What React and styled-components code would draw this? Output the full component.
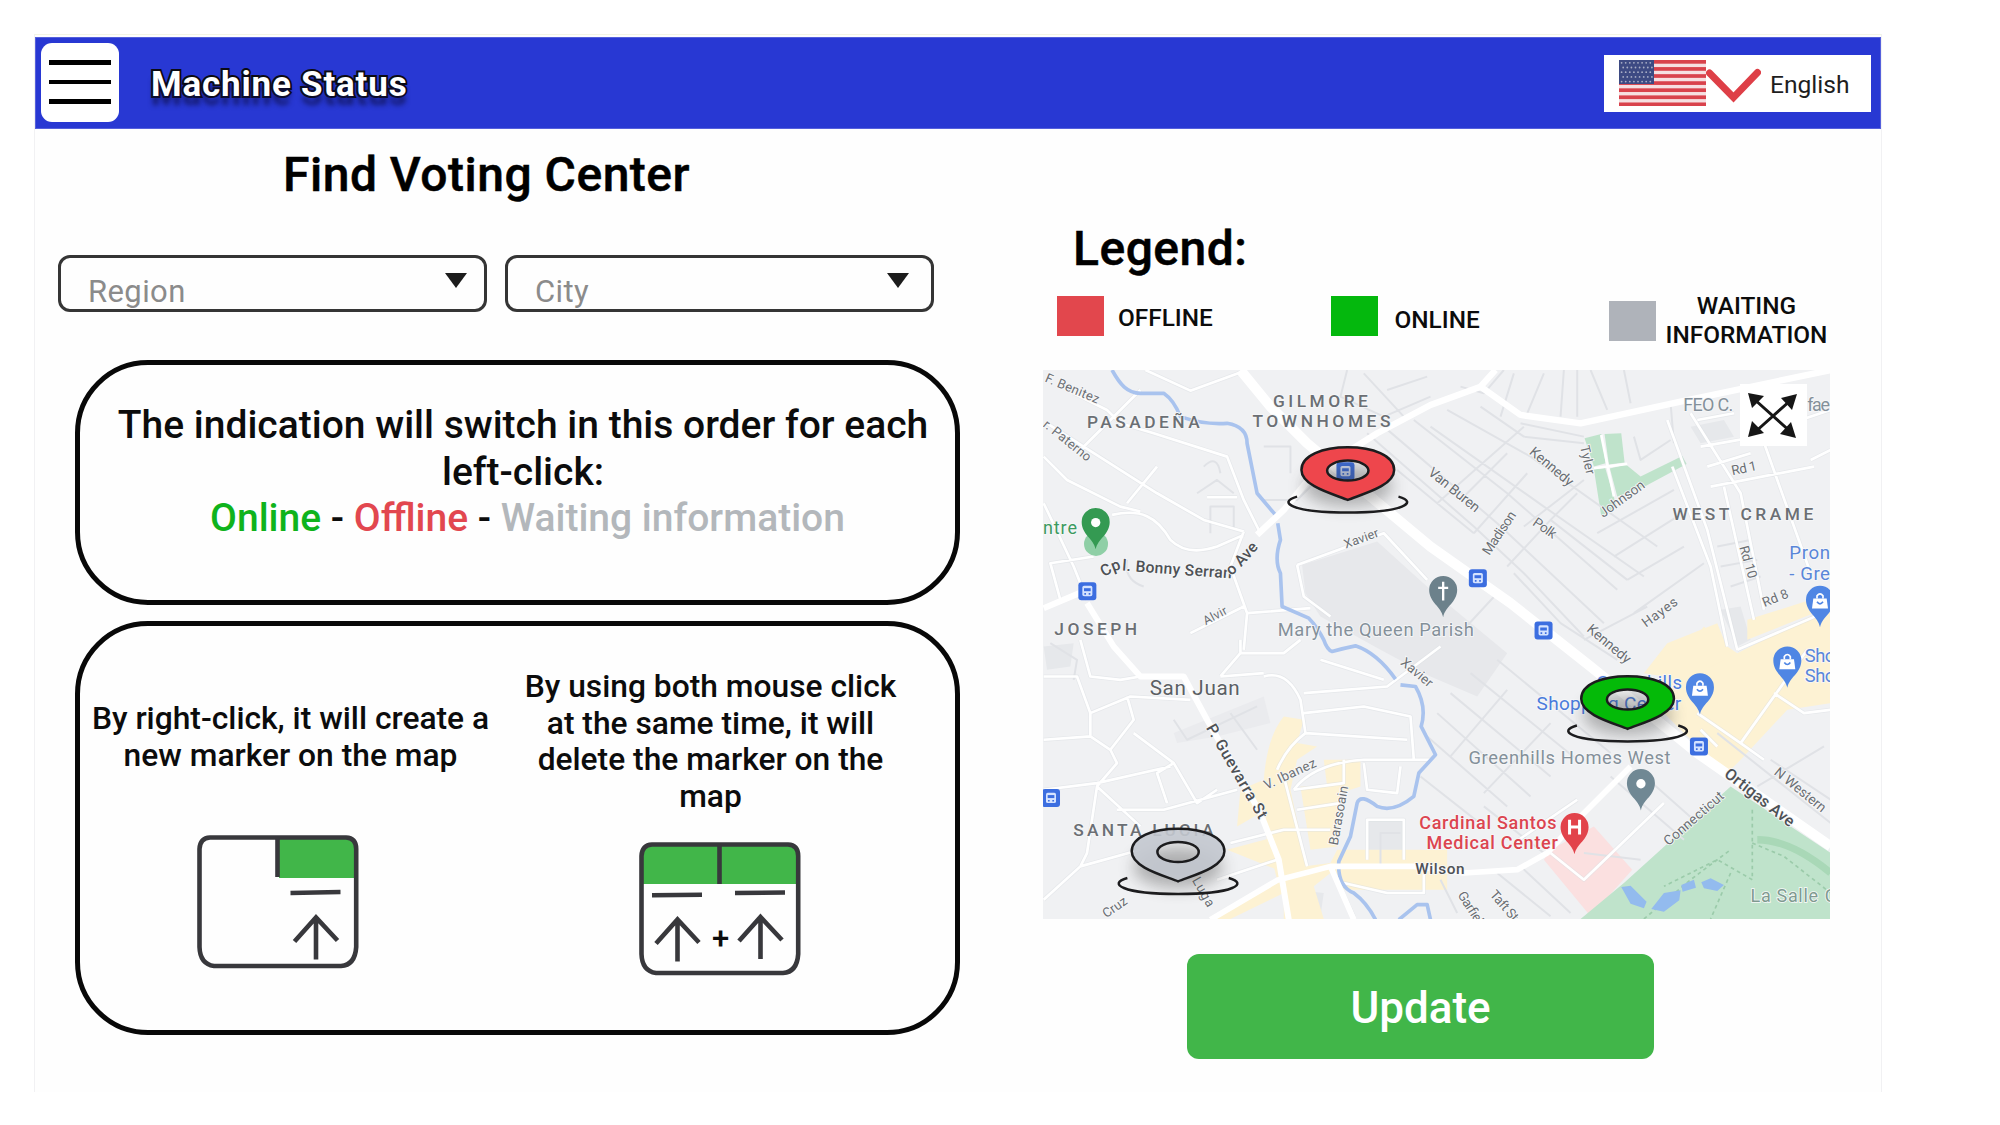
import React from "react";
import styled, { createGlobalStyle } from "styled-components";

const GlobalStyle = createGlobalStyle`
  *, *::before, *::after { box-sizing: border-box; }
  body { margin: 0; background: #fff; font-family: Roboto, "Liberation Sans", sans-serif; color: #0c0c0c; }
  h1, h2, p { margin: 0; font-weight: 500; }
  button { font: inherit; color: inherit; border: 0; padding: 0; background: none; }
`;

const Page = styled.div`
  height: 1125px;
  padding: 34px 0 0 34px;
  overflow: hidden;
`;
const Frame = styled.div`
  width: 1848px;
  height: 1058px;
  padding-top: 2px;
  border: 1px solid #f1f1f3;
  border-top-color: #f3f5e4;
  border-bottom: 0;
  background: #fefefe;
`;

/* ---------- header ---------- */
const Header = styled.header`
  display: flex;
  align-items: center;
  height: 92px;
  padding: 0 9px 0 6px;
  background: #2838d3;
  border: 1px solid #5560dc;
`;
const MenuButton = styled.button`
  display: flex;
  flex-direction: column;
  align-items: center;
  justify-content: center;
  gap: 15px;
  width: 78px;
  height: 79px;
  margin: -2px 32px 0 -1px;
  background: #fff;
  border-radius: 11px;
`;
const MenuBar = styled.span`
  width: 62px;
  height: 4.5px;
  background: #000;
`;
const HeaderTitle = styled.h1`
  flex: 1;
  padding-top: 4px;
  font-size: 35px;
  line-height: 40px;
  font-weight: 700;
  letter-spacing: 0.8px;
  color: #fff;
  -webkit-text-stroke: 4px #0b0b14;
  paint-order: stroke fill;
  text-shadow: 0 9px 5px rgba(15, 18, 80, 0.75);
`;
const LanguageButton = styled.button`
  display: flex;
  align-items: center;
  width: 267px;
  height: 57px;
  padding-left: 15px;
  background: #fff;
  font-size: 24.6px;
  line-height: 32px;
  color: #1e1e1e;
`;
const LanguageName = styled.span`
  padding-top: 4px;
`;
const FlagSvg = styled.svg`
  width: 87px;
  height: 46px;
`;
const ChevronSvg = styled.svg`
  width: 55px;
  height: 36px;
  margin: 6px 9px 0 0;
`;

/* ---------- body ---------- */
const Body = styled.main`
  display: grid;
  grid-template-columns: 1008px 1fr;
  margin-top: -1px;
`;
const Left = styled.section`
  padding: 19px 0 0 23px;
`;
const Heading = styled.h2`
  font-size: 48px;
  line-height: 56px;
  letter-spacing: 0.5px;
  margin-left: ${(p) => p.$indent}px;
  color: #000;
  -webkit-text-stroke: 0.5px #000;
`;
const Filters = styled.div`
  display: flex;
  gap: 18px;
  margin-top: 52px;
`;
const Select = styled.div`
  display: flex;
  justify-content: space-between;
  width: 429px;
  height: 57px;
  padding: 15px ${(p) => p.$inset}px 0 27px;
  border: 3px solid #353535;
  border-radius: 12px;
  font-size: 31px;
  line-height: 37px;
  letter-spacing: 0.4px;
  color: #8b8b8b;
`;
const Caret = styled.span`
  width: 22px;
  height: 15px;
  background: #1c1c1c;
  clip-path: polygon(0 0, 100% 0, 50% 100%);
`;
const Panel = styled.div`
  width: 885px;
  height: ${(p) => p.$height}px;
  margin: ${(p) => p.$top}px 0 0 17px;
  border: 5px solid #080808;
  border-radius: 73px;
`;
const OrderText = styled.p`
  padding-top: 37px;
  padding-left: 11px;
  text-align: center;
  font-size: 39px;
  line-height: 46.5px;
  white-space: nowrap;
`;
const StatusOrder = styled.span`
  display: block;
  padding-left: 9px;
`;
const Status = styled.span`
  color: ${(p) => p.$color};
`;
const Actions = styled.div`
  display: grid;
  grid-template-columns: 421px 419px;
`;
const Action = styled.div`
  display: flex;
  flex-direction: column;
  align-items: center;
  padding-top: ${(p) => p.$top}px;
`;
const ActionText = styled.p`
  text-align: center;
  font-size: 31.75px;
  line-height: 36.7px;
  white-space: nowrap;
`;
const MouseBox = styled.div`
  display: grid;
  margin: ${(p) => p.$margin};
  & > * { grid-area: 1 / 1; }
`;
const MouseSvg = styled.svg`
  width: 162px;
  height: 134px;
`;
const Plus = styled.span`
  place-self: center;
  padding: 60px 0 0 1px;
  font-size: 31px;
  line-height: 34px;
  font-weight: 500;
`;

/* ---------- right column ---------- */
const Right = styled.section`
  padding-top: 93px;
`;
const Legend = styled.div`
  display: grid;
  grid-template-columns: 273.5px 278px 1fr;
  height: 60px;
  margin: 14px 0 19px 14px;
`;
const LegendItem = styled.div`
  display: flex;
  align-items: flex-start;
  gap: ${(p) => p.$gap}px;
`;
const Swatch = styled.span`
  width: 47px;
  height: 40px;
  margin-top: ${(p) => p.$top}px;
  background: ${(p) => p.$color};
`;
const LegendLabel = styled.span`
  padding-top: ${(p) => p.$top}px;
  text-align: center;
  font-size: 24.4px;
  line-height: 29px;
  font-weight: 500;
`;
const MapBox = styled.div`
  position: relative;
  width: 787px;
  height: 549px;
`;
const MapSvg = styled.svg`
  display: block;
  width: 100%;
  height: 100%;
  font-family: Roboto, sans-serif;
`;
const ExpandButton = styled.button`
  position: absolute;
  top: 14px;
  left: 697px;
  width: 67px;
  height: 62px;
  background: #fff;
`;
const ExpandSvg = styled.svg`
  display: block;
  width: 67px;
  height: 62px;
`;
const UpdateButton = styled.button`
  display: block;
  width: 467px;
  height: 105px;
  margin: 35px 0 0 144px;
  padding-top: 2px;
  border-radius: 12px;
  background: #41b649;
  color: #fff;
  font-size: 44px;
  line-height: 52px;
  font-weight: 500;
`;

function Flag() {
  const stars = [];
  for (let r = 0; r < 5; r++)
    for (let c = 0; c < 8; c++)
      stars.push(<circle key={`${r}-${c}`} cx={2.6 + c * 4.1 + (r % 2) * 1.6} cy={2.8 + r * 4.7} r="0.9" />);
  return (
    <FlagSvg viewBox="0 0 87 46">
      <rect width="87" height="46" fill="#f6dfe1" />
      {[0, 1, 2, 3, 4, 5, 6].map((i) => (
        <rect key={i} y={i * 7.08} width="87" height="3.7" fill="#d9424c" />
      ))}
      <rect width="35" height="24" fill="#3d4a83" />
      <g fill="#a9aec6">{stars}</g>
    </FlagSvg>
  );
}

function Arrow({ x, y }) {
  return <path d={`M${x} ${y + 45}V${y + 2}M${x - 21.5} ${y + 27}L${x} ${y + 3}L${x + 21.5} ${y + 26}`} />;
}

function Mouse({ both }) {
  return (
    <MouseSvg viewBox="0 0 162 134">
      {both ? (
        <path d="M4 42V12Q5 4 13 4H149Q157 4 158 12V42Z" fill="#41b649" />
      ) : (
        <path d="M82 3H150Q158 4 158 14V43H82Z" fill="#41b649" />
      )}
      <g fill="none" stroke="#38383c" strokeWidth="4.6">
        <path d="M13 2.5H149Q159.200 3 159.200 14V112Q158 130 144 131H17Q3 129 2.500 112V14Q3 3 13 2.500Z" />
        <path d="M80.500 3V42" />
        {both ? (
          <>
            <path d="M13 53.200L63 52.700M96 51L146 50.500" />
            <Arrow x={38.5} y={74.5} />
            <Arrow x={121.5} y={72} />
          </>
        ) : (
          <>
            <path d="M93.500 58L143.500 57" />
            <Arrow x={119} y={79.5} />
          </>
        )}
      </g>
    </MouseSvg>
  );
}

/* ---------- map ---------- */
function Label({ x, y, w, size = 44, rot = 0, color = "#6b6f74", weight = 400, children }) {
  return (
    <text
      x={x}
      y={y}
      fontSize={size}
      fontWeight={weight}
      fill={color}
      stroke="#f7f8f9"
      strokeWidth="5"
      paintOrder="stroke"
      textLength={w}
      transform={rot ? `rotate(${rot} ${x} ${y})` : undefined}
    >
      {children}
    </text>
  );
}

function Pin({ x, y, color, kind }) {
  return (
    <g transform={`translate(${x} ${y})`}>
      <path d="M0 122C-6 90-42 78-42 40A42 42 0 0 1 42 40C42 78 6 90 0 122Z" fill={color} />
      {kind === "dot" && <circle cy="42" r="14" fill="#fff" />}
      {kind === "cross" && <path d="M0 16V72M-15 34H15" stroke="#fff" strokeWidth="7" />}
      {kind === "hospital" && <path d="M-15 18V62M15 18V62M-15 40H15" stroke="#fff" strokeWidth="9" />}
      {kind === "bag" && (
        <>
          <path d="M-20 36H20L24 66H-24Z" fill="#fff" />
          <path d="M-9 36V28Q0 16 9 28V36" fill="none" stroke="#fff" strokeWidth="5" />
          <path d="M-9 46Q0 58 9 46" fill="none" stroke={color} strokeWidth="5" />
        </>
      )}
    </g>
  );
}

function Stop({ x, y }) {
  return (
    <g transform={`translate(${x} ${y})`}>
      <rect x="-27" y="-27" width="54" height="54" rx="9" fill="#3c6ee0" />
      <rect x="-15" y="-16" width="30" height="31" rx="5" fill="#d5e3ff" />
      <rect x="-10" y="-9" width="20" height="9" fill="#3c6ee0" />
      <path d="M-9 8H-4M4 8H9M-11 17V20M11 17V20" stroke="#3c6ee0" strokeWidth="5" />
    </g>
  );
}

function Marker({ x, y, color }) {
  return (
    <g transform={`translate(${x} ${y})`}>
      <ellipse cy="118" rx="135" ry="62" fill="#3a3a3a" opacity="0.36" filter="url(#soft)" />
      <path
        fillRule="evenodd"
        fill={color}
        stroke="#1c1c1e"
        strokeWidth="7.500"
        d="M0 160C-45 142-139 118-139 70C-139 26-75 2 0 2C75 2 139 26 139 70C139 118 45 142 0 160ZM-62 72A62 30 0 0 0 62 72A62 30 0 0 0-62 72Z"
      />
      <path
        d="M-152 150C-212 166-170 198 0 198C170 198 212 166 152 150"
        fill="none"
        stroke="#1c1c1e"
        strokeWidth="7.500"
      />
    </g>
  );
}

const WHITE_ROADS =
  "M345 30L480 92L650 30M130 100L230 150L270 190L370 220L590 290L640 420L690 520M50 190L380 400L520 480L640 515M150 270L330 90M40 290L110 360L270 440L330 455M245 465C330 445 380 470 420 540Q470 590 560 560L640 525M380 320L290 430M530 412H620M40 430L130 620L170 720M90 720L60 610L190 590M640 515L600 620L650 760L640 870M650 760L840 745M800 615L1060 520L1190 660M800 615L820 710L900 770M480 820L640 740" +
  "M40 950H140L180 1060L300 1010L480 1020M150 840L180 950L270 960L330 950M180 1060V1130L240 1170L310 1080L290 1010M40 1140L180 1130M240 1170L260 1210L200 1280L170 1480L150 1520L40 1620M310 1120L430 1210L380 1240L410 1330M430 1210L500 1330L560 1290M40 1290L200 1270L420 1220M260 1350L400 1350L620 1290M200 1280L330 1400M150 1520L330 1470M630 840V880L570 950M630 880L760 880L810 840M700 950Q770 930 810 1020L825 1120Q770 1160 740 1230M570 950L700 940M820 1000L1070 980L1230 860M820 1060L1000 1040L1140 1070L1150 1200M825 1120L1130 1140M870 900L1060 960M790 1290Q850 1210 1000 1200H1200M760 1250L830 1520M790 1290L940 1270V1200M800 1350L930 1330M600 1450L760 1410L900 1410M560 1560L740 1500M1000 1210L1010 1290L1100 1300L1110 1220M1010 1500V1380H1120V1500M900 1520L970 1670M940 1570L1070 1600H1180V1540" +
  "M1910 180L2030 510L2120 870M1980 160L2130 400L2200 750M2190 220L2340 640M2000 180L2110 160M2010 260L2180 230M2040 380L2350 320M2080 380L2170 780M2030 320L2160 280M2340 300L2400 270M2220 210L2400 150M1925 320L2040 620L2090 860M2120 870L2400 750M2000 1060L2130 1150L2330 870M2130 1150L2200 1200M2230 1000L2320 1060L2400 1050M2060 1160L2010 1110M1450 1450L1640 1320M1560 1480L1660 1560L1900 1330";

const GREY_ROADS =
  "M1010 220L1330 500L1480 640L1660 830M1150 180L1430 400L1760 690M1250 150L1500 290L1880 560M1350 140L1480 230L1660 250M1100 330L1220 430L1330 520M1220 430L1480 200M1330 520L1490 340M1430 620L1560 480M1450 640L1590 790L1760 900M1640 400L1560 480L1790 660M1790 660L1960 560M1700 520L1930 390M1750 590L1940 470M1810 760L2020 610M1480 500L1660 360M1660 840L1850 740M1400 700L1280 830M1290 420L1430 280M2060 560L2160 540M2070 620L2180 600M2100 680L2190 650M1060 200L1400 490L1720 790M1200 200L1540 440L1840 650" +
  "M950 30L930 110L1060 170L1200 110M1000 40L1120 170M1070 90L1190 50M1290 80L1360 100L1420 30M1410 170L1450 40M1490 160L1540 40M1600 30L1590 170M1640 30L1640 170M1680 30L1730 150M1780 30L1800 130M1810 230L1830 300L1920 240M1470 190L1660 230M1920 130L1930 250" +
  "M700 260H780V340M700 420H800L860 360M500 400L560 360L610 400M540 520V440H610V510M290 600Q280 660 340 680M520 320Q560 280 570 340M1260 1000L1560 1250M1320 940L1640 1200M1400 900L1740 1180M1220 1060L1500 1310M1190 1130L1430 1340M1170 1250L1360 1400M1540 1480L1360 1340M1260 1190L1430 990M1360 1300L1560 1090M1740 1250L1960 1440M1820 1230L2000 1390M1230 1560L1280 1660M1400 1540L1560 1670M1470 1520L1620 1660M1660 1480L1830 1500M2180 1280L2380 1160M2060 1120L2400 1390M2220 1200L2400 1320M600 1060L680 1170M1050 1520V1420H1110M60 850L140 900L130 960M430 1080L470 1140L680 1040";

function CityMap() {
  return (
    <MapSvg viewBox="38 30 2360 1648" preserveAspectRatio="none">
      <defs>
        <filter id="soft" x="-30%" y="-60%" width="160%" height="220%">
          <feGaussianBlur stdDeviation="24" />
        </filter>
      </defs>
      <rect x="38" y="30" width="2360" height="1648" fill="#f0f1f3" />

      {/* built-up and institutional blocks */}
      <path d="M815 615L1040 545L1200 690L1430 880L1340 1010L1200 950L1050 870L870 770L825 700Z" fill="#e7e8eb" />
      <path d="M1980 200L2080 180L2110 230L2010 250ZM2070 750L2120 860L2160 840L2130 740ZM1010 1380H1120V1480L1010 1490ZM790 1590L880 1600L870 1670H790ZM40 860L130 850L120 920L50 930Z" fill="#e6e8eb" />
      <path d="M430 1120L700 1010L720 1090L560 1130L440 1150Z" fill="#eaebee" />

      {/* commercial zones */}
      <g fill="#fdf2d3">
        <path d="M760 1070L820 1080L800 1150L860 1160L800 1200L780 1290L830 1520L740 1560L690 1360L620 1400L630 1290L700 1260Q710 1130 760 1070Z" />
        <path d="M880 1200H990V1280L930 1300L920 1460L840 1470L810 1280L890 1280Z" />
        <path d="M590 1470L740 1430L760 1560L540 1678H600L760 1600V1678H880L850 1580L900 1540L940 1590H1250V1470H920L900 1510L740 1530Z" />
        <path d="M1900 950L2020 800L2060 840L2120 880L2400 740V1030L2270 1050L2130 1200L2090 1240L1960 1120L1850 1010Z" />
        <path d="M1840 940L1910 850L2060 790L2100 890L1960 960Z" />
        <path d="M2150 780L2340 720L2400 690V740L2150 840Z" />
      </g>

      <path d="M1560 1470L1690 1400L1805 1530L1680 1670L1540 1500Z" fill="#fbe0e0" />
      <g fill="#bfe3cb">
        <path d="M2100 1280L2400 1480V1678H1650L1780 1570Z" />
        <path d="M1662 235L1712 222L1725 310L1690 320ZM1722 222L1772 220L1782 308L1735 314ZM1690 328L1724 324L1758 440L1712 468ZM1738 326L1786 314L1830 350L1955 288L1968 312L1845 378L1760 410Z" />
      </g>
      <path d="M2180 1440Q2280 1440 2400 1540" fill="none" stroke="#a9d8b7" strokeWidth="22" />
      <path
        d="M2165 1350V1560L2060 1500L1900 1580M2165 1450L2260 1490L2400 1600M1840 1678L1980 1560L2100 1470M2100 1540L2040 1678"
        fill="none"
        stroke="#9bcbaa"
        strokeWidth="5"
        strokeDasharray="11 10"
      />
      <path
        d="M1772 1582L1800 1578L1848 1626L1840 1646L1800 1632ZM1862 1648L1900 1600L1950 1592L1946 1622L1900 1656ZM1952 1576L1990 1560L1996 1584L1956 1596ZM2012 1568L2040 1556L2080 1576L2060 1594L2020 1586Z"
        fill="#93bbee"
      />

      {/* streets */}
      <path d={GREY_ROADS} fill="none" stroke="#e0e2e6" strokeWidth="6" strokeLinejoin="round" />
      <path d={WHITE_ROADS} fill="none" stroke="#dcdfe3" strokeWidth="12" strokeLinejoin="round" opacity="0.5" />
      <path d={WHITE_ROADS} fill="none" stroke="#fff" strokeWidth="8" strokeLinejoin="round" />
      <path
        d="M245 30C270 75 290 98 330 100H400Q430 120 450 170Q520 195 590 190Q650 200 650 250L680 400L735 465M742 490L750 540Q730 600 750 640L755 740L835 775Q860 800 880 840Q890 870 905 875Q940 865 975 858Q1040 880 1095 958M1110 975L1155 980Q1190 1040 1172 1100L1215 1185L1165 1240L1150 1310Q1090 1360 1040 1340Q990 1300 980 1330L960 1430L925 1505Q920 1580 970 1600Q1010 1630 1035 1680M1105 1680L1160 1635H1190L1200 1680"
        fill="none"
        stroke="#a9c3ee"
        strokeWidth="11"
        strokeLinejoin="round"
      />
      <g fill="none" stroke="#fff" strokeLinejoin="round">
        <path d="M630 30L720 140L830 250L960 360L1200 560L1440 730L1680 920L2000 1180L2400 1460" strokeWidth="30" />
        <path d="M680 525L760 450L850 340L1040 220L1200 135L1350 80L1470 165L1650 190L1950 125L2400 30M1350 80L1395 30" strokeWidth="19" />
        <path d="M170 730L250 860L330 950H460L530 1080L690 1360L745 1500L775 1680M40 745L170 690" strokeWidth="18" />
        <path d="M540 1680L740 1562L900 1520H1150L1300 1540L1460 1530L1550 1480L1650 1370L1800 1220M900 1520L970 1680" strokeWidth="17" />
        <path d="M1712 225L1750 410M1690 325L1790 312" strokeWidth="8" />
      </g>

      {/* district and street names */}
      <Label x={170} y={205} w={338} size={52} weight={500}>PASADEÑA</Label>
      <Label x={728} y={142} w={284} size={52} weight={500}>GILMORE</Label>
      <Label x={666} y={202} w={414} size={52} weight={500}>TOWNHOMES</Label>
      <Label x={72} y={824} w={248} size={52} weight={500}>JOSEPH</Label>
      <Label x={1926} y={480} w={422} size={52} weight={500}>WEST CRAME</Label>
      <Label x={129} y={1430} w={420} size={52} weight={500}>SANTA LUCIA</Label>
      <Label x={358} y={1006} w={270} size={62} color="#5b5f64">San Juan</Label>
      <Label x={38} y={522} w={102} size={54} color="#3c9a60">ntre</Label>
      <Label x={742} y={828} w={588} size={55} color="#84909a">Mary the Queen Parish</Label>
      <Label x={1314} y={1212} w={606} size={55} color="#84909a">Greenhills Homes West</Label>
      <Label x={1958} y={152} w={150} size={54} color="#84909a">FEO C.</Label>
      <Label x={2330} y={152} w={68} size={54} color="#84909a">fae</Label>
      <Label x={2160} y={1627} w={202} size={54} color="#7f9a90">La Salle</Label>
      <Label x={2382} y={1627} w={32} size={54} color="#7f9a90">C</Label>
      <Label x={1166} y={1408} w={412} size={54} color="#dc4550" weight={500}>Cardinal Santos</Label>
      <Label x={1188} y={1469} w={394} size={54} color="#dc4550" weight={500}>Medical Center</Label>
      <Label x={1698} y={988} w={256} size={55} color="#4a7bdc">Greenhills</Label>
      <Label x={1518} y={1050} w={434} size={57} color="#4a7bdc">Shopping Center</Label>
      <Label x={2276} y={598} w={122} size={56} color="#5a86d8">Pron</Label>
      <Label x={2276} y={660} w={122} size={56} color="#5a86d8">- Gre</Label>
      <Label x={2322} y={906} w={92} size={55} color="#5a86d8">Sho</Label>
      <Label x={2322} y={968} w={92} size={55} color="#5a86d8">Sho</Label>
      <Label x={1154} y={1543} w={148} size={46} color="#4e5155" weight={500}>Wilson</Label>
      <Label x={42} y={64} w={172} size={39} rot={23}>F. Benitez</Label>
      <Label x={36} y={198} w={172} size={39} rot={39}>r. Paterno</Label>
      <Label x={946} y={566} w={108} size={38} rot={-20}>Xavier</Label>
      <Label x={526} y={796} w={76} size={37} rot={-28}>Alvir</Label>
      <Label x={1190} y={342} w={186} size={42} rot={39}>Van Buren</Label>
      <Label x={1376} y={588} w={148} size={41} rot={-56}>Madison</Label>
      <Label x={1504} y={494} w={76} size={41} rot={35}>Polk</Label>
      <Label x={1494} y={280} w={158} size={42} rot={40}>Kennedy</Label>
      <Label x={1648} y={260} w={88} size={40} rot={77}>Tyler</Label>
      <Label x={1718} y={474} w={158} size={41} rot={-36}>Johnson</Label>
      <Label x={1666} y={812} w={158} size={42} rot={40}>Kennedy</Label>
      <Label x={1846} y={804} w={122} size={41} rot={-36}>Hayes</Label>
      <Label x={2106} y={346} w={76} size={40} rot={-12}>Rd 1</Label>
      <Label x={2126} y={562} w={100} size={40} rot={74}>Rd 10</Label>
      <Label x={2202} y={742} w={80} size={40} rot={-22}>Rd 8</Label>
      <Label x={1108} y={912} w={112} size={40} rot={40}>Xavier</Label>
      <Label x={708} y={1290} w={168} size={40} rot={-25}>V. Ibanez</Label>
      <Label x={922} y={1458} w={180} size={40} rot={-80}>Barasoain</Label>
      <Label x={228} y={1676} w={80} size={39} rot={-35}>Cruz</Label>
      <Label x={484} y={1562} w={96} size={40} rot={60}>Luga</Label>
      <Label x={1280} y={1606} w={128} size={40} rot={57}>Garfield</Label>
      <Label x={1376} y={1606} w={108} size={40} rot={49}>Taft St</Label>
      <Label x={1914} y={1460} w={224} size={41} rot={-41}>Connecticut</Label>
      <Label x={2228} y={1242} w={186} size={41} rot={39}>N Western</Label>
      <Label x={526} y={1104} w={320} size={47} rot={60} color="#4e5155" weight={500}>P. Guevarra St</Label>
      <Label x={2078} y={1248} w={252} size={48} rot={38} color="#4e5155" weight={500}>Ortigas Ave</Label>
      <path id="serrano" d="M222 652Q238 640 262 631Q420 643 592 655Q627 635 712 530" fill="none" />
      <text fontSize="47" fontWeight="500" fill="#4e5155" stroke="#f7f8f9" strokeWidth="5" paintOrder="stroke">
        <textPath href="#serrano" textLength="508">Cpl. Bonny Serrano Ave</textPath>
      </text>

      {/* points of interest */}
      <circle cx="197" cy="552" r="36" fill="#8fcfa6" />
      <Pin x={196} y={446} color="#349a52" kind="dot" />
      <Pin x={1238} y={650} color="#6c818b" kind="cross" />
      <Pin x={1831} y={1230} color="#708894" kind="dot" />
      <Pin x={1632} y={1362} color="#e2434b" kind="hospital" />
      <Pin x={2008} y={942} color="#4f86e4" kind="bag" />
      <Pin x={2270} y={862} color="#4f86e4" kind="bag" />
      <Pin x={2368} y={680} color="#4f86e4" kind="bag" />
      <Stop x={171} y={694} />
      <Stop x={945} y={334} />
      <Stop x={1342} y={655} />
      <Stop x={1539} y={812} />
      <Stop x={2005} y={1160} />
      <Stop x={62} y={1315} />

      <Marker x={952} y={260} color="#ee464c" />
      <Marker x={1791} y={947} color="#04ba08" />
      <Marker x={443} y={1405} color="#c3c8cfe6" />
    </MapSvg>
  );
}

function ExpandIcon() {
  return (
    <ExpandSvg viewBox="0 0 67 62">
      <path d="M14 15L52 49M51 16L14 49" stroke="#161616" strokeWidth="3" />
      <path d="M8 9L24 12L12 24ZM57 10L52 26L41 14ZM8 53L12 37L24 49ZM56 54L40 50L51 38Z" fill="#161616" />
    </ExpandSvg>
  );
}

export default function App() {
  return (
    <Page>
      <GlobalStyle />
      <Frame>
        <Header>
          <MenuButton aria-label="Menu">
            <MenuBar />
            <MenuBar />
            <MenuBar />
          </MenuButton>
          <HeaderTitle>Machine Status</HeaderTitle>
          <LanguageButton>
            <Flag />
            <ChevronSvg viewBox="0 0 55 36">
              <path d="M3.500 5L27.500 29.500L51.500 4.500" fill="none" stroke="#de3f47" strokeWidth="7" strokeLinecap="round" />
            </ChevronSvg>
            <LanguageName>English</LanguageName>
          </LanguageButton>
        </Header>
        <Body>
          <Left>
            <Heading $indent={225}>Find Voting Center</Heading>
            <Filters>
              <Select $inset={17}>
                Region
                <Caret />
              </Select>
              <Select $inset={22}>
                City
                <Caret />
              </Select>
            </Filters>
            <Panel $height={245} $top={48}>
              <OrderText>
                The indication will switch in this order for each
                <br />
                left-click:
                <StatusOrder>
                  <Status $color="#0fb31c">Online</Status> - <Status $color="#e2474f">Offline</Status> -{" "}
                  <Status $color="#b3b7bb">Waiting information</Status>
                </StatusOrder>
              </OrderText>
            </Panel>
            <Panel $height={414} $top={16}>
              <Actions>
                <Action $top={75}>
                  <ActionText>
                    By right-click, it will create a<br />
                    new marker on the map
                  </ActionText>
                  <MouseBox $margin="61px 26px 0 0">
                    <Mouse />
                  </MouseBox>
                </Action>
                <Action $top={43}>
                  <ActionText>
                    By using both mouse click
                    <br />
                    at the same time, it will
                    <br />
                    delete the marker on the
                    <br />
                    map
                  </ActionText>
                  <MouseBox $margin="26px 0 0 19px">
                    <Mouse both />
                    <Plus>+</Plus>
                  </MouseBox>
                </Action>
              </Actions>
            </Panel>
          </Left>
          <Right>
            <Heading $indent={30}>Legend:</Heading>
            <Legend>
              <LegendItem $gap={14}>
                <Swatch $color="#e2474d" $top={5} />
                <LegendLabel $top={11.5}>OFFLINE</LegendLabel>
              </LegendItem>
              <LegendItem $gap={17}>
                <Swatch $color="#04b80d" $top={5} />
                <LegendLabel $top={14}>ONLINE</LegendLabel>
              </LegendItem>
              <LegendItem $gap={10}>
                <Swatch $color="#afb3ba" $top={10} />
                <LegendLabel $top={0}>
                  WAITING
                  <br />
                  INFORMATION
                </LegendLabel>
              </LegendItem>
            </Legend>
            <MapBox>
              <CityMap />
              <ExpandButton aria-label="Expand map">
                <ExpandIcon />
              </ExpandButton>
            </MapBox>
            <UpdateButton>Update</UpdateButton>
          </Right>
        </Body>
      </Frame>
    </Page>
  );
}
